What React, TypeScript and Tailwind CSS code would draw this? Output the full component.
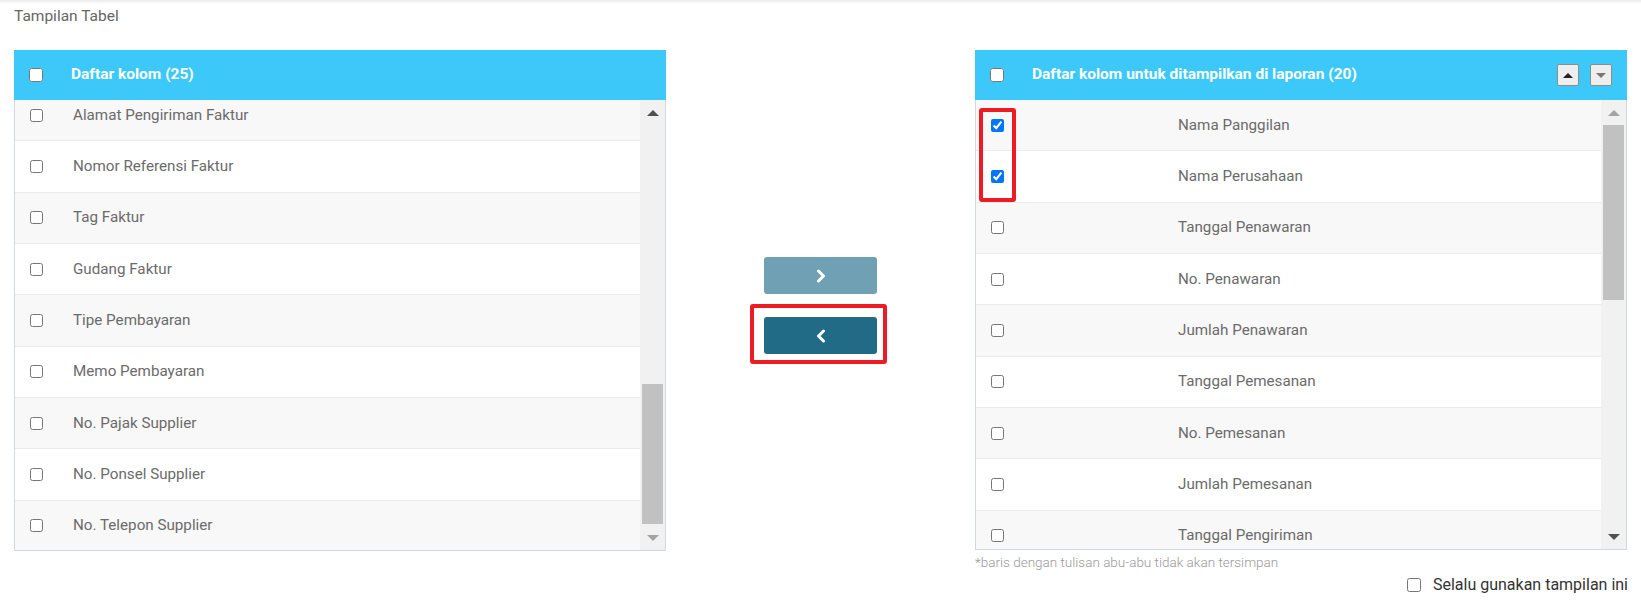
import { useState } from 'react';

const leftColumns = [
  'Alamat Pengiriman Faktur',
  'Nomor Referensi Faktur',
  'Tag Faktur',
  'Gudang Faktur',
  'Tipe Pembayaran',
  'Memo Pembayaran',
  'No. Pajak Supplier',
  'No. Ponsel Supplier',
  'No. Telepon Supplier',
];

const rightColumns = [
  { label: 'Nama Panggilan', checked: true },
  { label: 'Nama Perusahaan', checked: true },
  { label: 'Tanggal Penawaran', checked: false },
  { label: 'No. Penawaran', checked: false },
  { label: 'Jumlah Penawaran', checked: false },
  { label: 'Tanggal Pemesanan', checked: false },
  { label: 'No. Pemesanan', checked: false },
  { label: 'Jumlah Pemesanan', checked: false },
  { label: 'Tanggal Pengiriman', checked: false },
];

function ArrowUp({ dark }: { dark?: boolean }) {
  return (
    <div
      className={
        dark
          ? 'w-0 h-0 border-x-[6px] border-x-transparent border-b-[6px] border-b-[#505050]'
          : 'w-0 h-0 border-x-[6px] border-x-transparent border-b-[6px] border-b-[#a3a3a3]'
      }
    />
  );
}

function ArrowDown({ dark }: { dark?: boolean }) {
  return (
    <div
      className={
        dark
          ? 'w-0 h-0 border-x-[6px] border-x-transparent border-t-[6px] border-t-[#505050]'
          : 'w-0 h-0 border-x-[6px] border-x-transparent border-t-[6px] border-t-[#a3a3a3]'
      }
    />
  );
}

function Chevron({ left }: { left?: boolean }) {
  return (
    <svg width="10" height="14" viewBox="0 0 10 14" fill="none">
      <path
        d={left ? 'M7.5 2 L2.5 7 L7.5 12' : 'M2.5 2 L7.5 7 L2.5 12'}
        stroke="white"
        strokeWidth="3"
        strokeLinecap="round"
        strokeLinejoin="round"
      />
    </svg>
  );
}

function PanelHeader({ title, children }: { title: string; children?: React.ReactNode }) {
  return (
    <div className="h-[50px] bg-[#3cc9f9] flex items-center pl-[15px]">
      <input type="checkbox" className="m-0 w-[14px] h-[14px]" />
      <span className="ml-[28px] text-[15.5px] font-bold text-white">{title}</span>
      {children}
    </div>
  );
}

export default function App() {
  const [always, setAlways] = useState(false);

  return (
    <div className="min-h-screen bg-white font-['Roboto','Liberation_Sans',sans-serif]">
      <div className="h-[4px] bg-linear-to-b from-[#ebebeb] to-white" />
      <div className="px-[14px]">
        <div className="h-[46px] pt-[1px] leading-[22px] text-[15.5px] text-[#666]">
          Tampilan Tabel
        </div>

        <div className="flex">
          {/* left list */}
          <div className="w-[652px]">
            <PanelHeader title="Daftar kolom (25)" />
            <div className="h-[451px] flex border-x border-b border-[#d2d9dc]">
              <div className="flex-1 overflow-hidden">
                <div className="-mt-[10px]">
                  {leftColumns.map((c, i) => (
                    <div
                      key={c}
                      className={
                        i % 2 === 0
                          ? 'h-[51.33px] flex items-center pl-[15px] border-b border-[#ebebeb] bg-[#f8f8f8]'
                          : 'h-[51.33px] flex items-center pl-[15px] border-b border-[#ebebeb] bg-white'
                      }
                    >
                      <input type="checkbox" className="m-0 w-[13px] h-[13px]" />
                      <span className="ml-[30px] text-[15.2px] text-[#6b6b6b]">{c}</span>
                    </div>
                  ))}
                </div>
              </div>
              <div className="w-[25px] bg-[#f1f1f1] flex flex-col">
                <div className="h-[25px] flex items-center justify-center">
                  <ArrowUp dark />
                </div>
                <div className="flex-1 flex flex-col px-[2px]">
                  <div className="flex-1" />
                  <div className="h-[140px] bg-[#c1c1c1]" />
                  <div className="h-[1px]" />
                </div>
                <div className="h-[25px] flex items-center justify-center">
                  <ArrowDown />
                </div>
              </div>
            </div>
          </div>

          {/* move buttons */}
          <div className="flex-1 flex flex-col items-center pt-[207px]">
            <button className="w-[113px] h-[37px] rounded-[3px] bg-[#6fa0b3] flex items-center justify-center">
              <Chevron />
            </button>
            <div className="relative mt-[23px]">
              <button className="w-[113px] h-[37px] rounded-[3px] bg-[#216b87] flex items-center justify-center">
                <Chevron left />
              </button>
              <div className="absolute -left-[14px] -right-[10px] -top-[13px] -bottom-[10px] border-4 border-[#ed1c24] rounded-[3px]" />
            </div>
          </div>

          {/* right list */}
          <div className="w-[652px]">
            <PanelHeader title="Daftar kolom untuk ditampilkan di laporan (20)">
              <div className="ml-auto flex gap-[11px] pr-[15px]">
                <button className="w-[22px] h-[22px] bg-[#eeeeee] border border-[#8c8c8c] rounded-[2px] flex items-center justify-center">
                  <div className="w-0 h-0 border-x-[5px] border-x-transparent border-b-[5px] border-b-[#222]" />
                </button>
                <button className="w-[22px] h-[22px] bg-[#eeeeee] border border-[#8c8c8c] rounded-[2px] flex items-center justify-center">
                  <div className="w-0 h-0 border-x-[5px] border-x-transparent border-t-[5px] border-t-[#777]" />
                </button>
              </div>
            </PanelHeader>
            <div className="relative h-[450px] flex border-x border-b border-[#d2d9dc]">
              <div className="flex-1 overflow-hidden">
                {rightColumns.map((c, i) => (
                  <div
                    key={c.label}
                    className={
                      i % 2 === 0
                        ? 'h-[51.33px] flex items-center border-b border-[#ebebeb] bg-[#f8f8f8]'
                        : 'h-[51.33px] flex items-center border-b border-[#ebebeb] bg-white'
                    }
                  >
                    <div className="w-[202px] pl-[15px] flex items-center">
                      <input type="checkbox" defaultChecked={c.checked} className="m-0 w-[13px] h-[13px]" />
                    </div>
                    <span className="text-[15.2px] text-[#6b6b6b]">{c.label}</span>
                  </div>
                ))}
              </div>
              <div className="w-[25px] bg-[#f1f1f1] flex flex-col">
                <div className="h-[25px] flex items-center justify-center">
                  <ArrowUp />
                </div>
                <div className="flex-1 flex flex-col px-[2px]">
                  <div className="h-[175px] bg-[#c1c1c1]" />
                  <div className="flex-1" />
                </div>
                <div className="h-[25px] flex items-center justify-center">
                  <ArrowDown dark />
                </div>
              </div>
              <div className="absolute left-[3px] top-[8px] w-[37px] h-[94px] border-4 border-[#ed1c24] rounded-[3px]" />
            </div>
            <div className="mt-[4px] text-[13.5px] leading-[16px] font-light text-[#999]">
              *baris dengan tulisan abu-abu tidak akan tersimpan
            </div>
            <label className="mt-[4px] h-[22px] flex items-center justify-end gap-[12px] -mr-[1px]">
              <input
                type="checkbox"
                checked={always}
                onChange={(e) => setAlways(e.target.checked)}
                className="m-0 w-[14px] h-[14px]"
              />
              <span className="text-[16px] text-[#333]">Selalu gunakan tampilan ini</span>
            </label>
          </div>
        </div>
      </div>
    </div>
  );
}
